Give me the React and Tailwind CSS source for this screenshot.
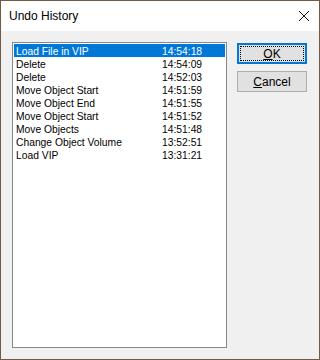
const history = [
  ["Load File in VIP", "14:54:18"],
  ["Delete", "14:54:09"],
  ["Delete", "14:52:03"],
  ["Move Object Start", "14:51:59"],
  ["Move Object End", "14:51:55"],
  ["Move Object Start", "14:51:52"],
  ["Move Objects", "14:51:48"],
  ["Change Object Volume", "13:52:51"],
  ["Load VIP", "13:31:21"],
];

function CloseIcon() {
  return (
    <svg width="12" height="12" viewBox="0 0 12 12" className="block">
      <path d="M1 1 L11 11 M11 1 L1 11" stroke="#111" strokeWidth="1" fill="none" />
    </svg>
  );
}

export default function App() {
  return (
    <div className="w-[320px] h-[360px] border border-[#705c46] flex flex-col font-['Liberation_Sans',Arial,sans-serif] select-none">
      <div className="h-[30px] bg-white flex items-center justify-between pl-[8px] pr-[9px]">
        <span className="text-[12px] text-black">Undo History</span>
        <CloseIcon />
      </div>

      <div className="flex-1 bg-[#f0f0f0] flex pl-[11px] pt-[11px]">
        <div className="w-[215px] h-[306px] bg-white border border-[#828790] p-[1px]">
          {history.map(([label, time], i) => (
            <div
              key={i}
              className={`h-[13px] flex pl-[2px] text-[10.3px] leading-[15px] ${
                i === 0 ? "bg-[#0078d7] text-white" : "text-black"
              }`}
            >
              <span className="w-[146px]">{label}</span>
              <span>{time}</span>
            </div>
          ))}
        </div>

        <div className="ml-[10px] mt-[1px] flex flex-col gap-[7px]">
          <button className="w-[70px] h-[21px] bg-[#e1e1e1] border-2 border-[#0078d7] p-[1px] text-[12px] text-black">
            <div className="w-full h-full border border-dotted border-black flex items-center justify-center">
              <span><span className="underline">O</span>K</span>
            </div>
          </button>
          <button className="w-[70px] h-[21px] bg-[#e1e1e1] border border-[#adadad] text-[12px] text-black flex items-center justify-center">
            <span><span className="underline">C</span>ancel</span>
          </button>
        </div>
      </div>
    </div>
  );
}
